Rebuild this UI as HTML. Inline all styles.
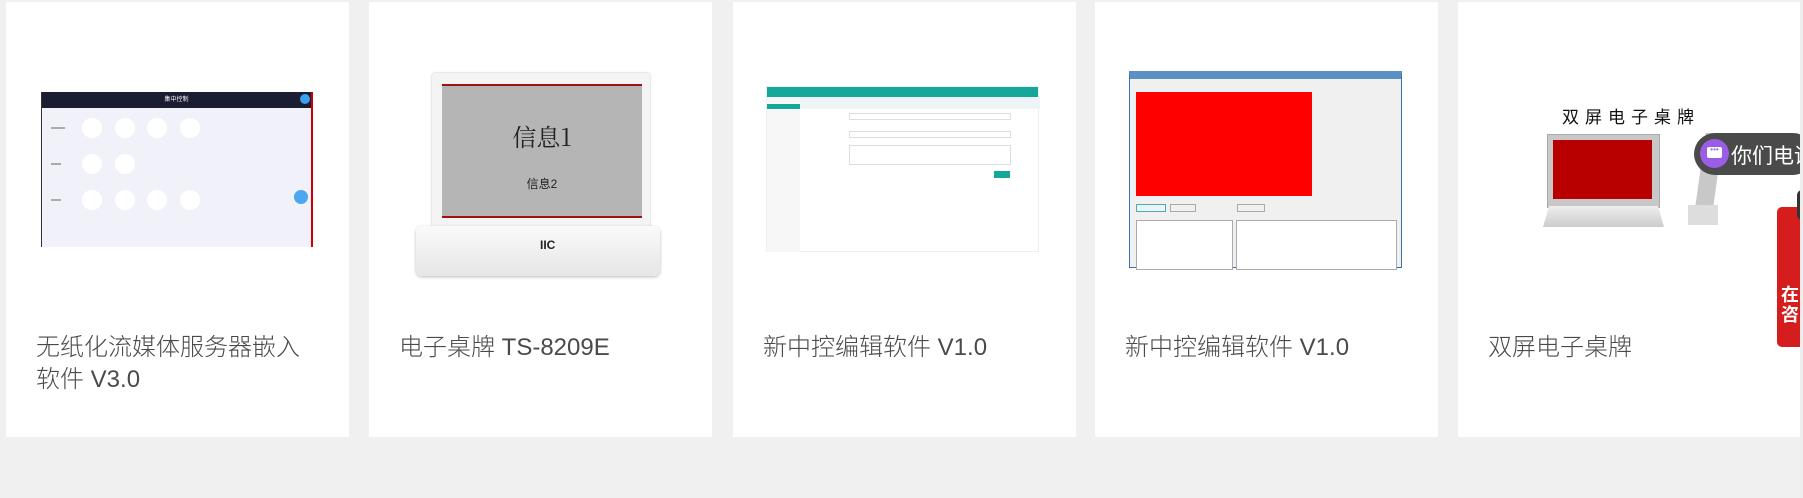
<!DOCTYPE html>
<html><head><meta charset="utf-8"><style>
*{margin:0;padding:0;box-sizing:border-box}
body{width:1803px;height:498px;background:#f0f0f0;overflow:hidden;position:relative;font-family:"Liberation Sans","Noto Sans CJK SC",sans-serif}
.card{position:absolute;top:2px;height:435px;width:343px;background:#fff}
.t{position:absolute;left:30px;top:330px;font-size:24px;line-height:32px;color:#4a4a4a;font-weight:300;width:268px}
.a{position:absolute}
</style></head><body>
<div class="card" style="left:6px"><div class="t">无纸化流媒体服务器嵌入软件 V3.0</div></div>
<div class="card" style="left:369px"><div class="t">电子桌牌 TS-8209E</div></div>
<div class="card" style="left:733px"><div class="t">新中控编辑软件 V1.0</div></div>
<div class="card" style="left:1095px"><div class="t">新中控编辑软件 V1.0</div></div>
<div class="card" style="left:1458px;width:345px"><div class="t">双屏电子桌牌</div></div>

<!-- img1 -->
<div class="a" style="left:41px;top:92px;width:272px;height:155px;background:#f1f2f9;border-left:1px solid #333;border-right:2px solid #c00">
 <div style="height:16px;background:#1b1d33;color:#fff;font-size:6px;text-align:center;line-height:16px">集中控制</div>
 <div class="a" style="left:258px;top:2px;width:10px;height:10px;border-radius:50%;background:#3aa0f0"></div>
 <div class="a" style="left:252px;top:98px;width:14px;height:14px;border-radius:50%;background:#4aa7f0"></div>
 <svg class="a" style="left:0;top:0" width="272" height="155">
  <g fill="#fff"><circle cx="50" cy="36" r="10"/><circle cx="83" cy="36" r="10"/><circle cx="115" cy="36" r="10"/><circle cx="148" cy="36" r="10"/>
  <circle cx="50" cy="72" r="10"/><circle cx="83" cy="72" r="10"/>
  <circle cx="50" cy="108" r="10"/><circle cx="83" cy="108" r="10"/><circle cx="115" cy="108" r="10"/><circle cx="148" cy="108" r="10"/></g>
  <g fill="#aaa"><rect x="9" y="35" width="14" height="2"/><rect x="9" y="71" width="10" height="2"/><rect x="9" y="107" width="10" height="2"/></g>
 </svg>
</div>

<!-- img2 -->
<div class="a" style="left:432px;top:73px;width:218px;height:175px;background:#f4f4f4;border-radius:3px;box-shadow:0 0 2px #bbb"></div>
<div class="a" style="left:442px;top:84px;width:200px;height:134px;background:#b5b5b5;border-top:2px solid #a01010;border-bottom:2px solid #a01010"></div>
<div class="a" style="left:442px;top:118px;width:200px;text-align:center;font-family:'Noto Serif CJK SC',serif;font-size:24px;color:#222">信息1</div>
<div class="a" style="left:442px;top:175px;width:200px;text-align:center;font-size:12px;color:#222">信息2</div>
<div class="a" style="left:416px;top:226px;width:244px;height:50px;background:linear-gradient(#fafafa,#e6e6e6);border-radius:6px;box-shadow:0 1px 3px #bbb"></div>
<div class="a" style="left:540px;top:238px;font-size:12px;font-weight:bold;color:#222">IIC</div>

<!-- img3 -->
<div class="a" style="left:766px;top:86px;width:273px;height:166px;background:#fff;border:1px solid #eee">
 <div style="height:10px;background:#16a79b"></div>
 <div class="a" style="left:0;top:10px;width:33px;height:155px;background:#f7f7f7"></div>
 <div class="a" style="left:0;top:17px;width:33px;height:5px;background:#16a79b"></div>
 <div class="a" style="left:33px;top:10px;width:240px;height:12px;background:#eef4f6"></div>
 <div class="a" style="left:82px;top:26px;width:162px;height:7px;border:1px solid #ddd"></div>
 <div class="a" style="left:82px;top:44px;width:162px;height:7px;border:1px solid #ddd"></div>
 <div class="a" style="left:82px;top:58px;width:162px;height:20px;border:1px solid #ddd"></div>
 <div class="a" style="left:227px;top:84px;width:16px;height:7px;background:#16a79b"></div>
</div>

<!-- img4 -->
<div class="a" style="left:1129px;top:71px;width:273px;height:197px;background:#f0f0f0;border:1px solid #3a6fb0;border-top:8px solid #5b8fc8">
 <div class="a" style="left:6px;top:13px;width:176px;height:104px;background:#f00"></div>
 <div class="a" style="left:6px;top:125px;width:30px;height:8px;border:1px solid #5aa;background:#e8f4fa"></div>
 <div class="a" style="left:40px;top:125px;width:26px;height:8px;border:1px solid #aaa"></div>
 <div class="a" style="left:107px;top:125px;width:28px;height:8px;border:1px solid #aaa"></div>
 <div class="a" style="left:6px;top:141px;width:97px;height:50px;background:#fff;border:1px solid #aaa"></div>
 <div class="a" style="left:106px;top:141px;width:161px;height:50px;background:#fff;border:1px solid #aaa"></div>
</div>

<!-- img5 -->
<div class="a" style="left:1562px;top:103px;font-size:17px;letter-spacing:6px;color:#111">双屏电子桌牌</div>
<div class="a" style="left:1547px;top:134px;width:113px;height:74px;background:#c8c8c8;border:1px solid #aaa"></div>
<div class="a" style="left:1553px;top:140px;width:99px;height:59px;background:#b80000"></div>
<div class="a" style="left:1543px;top:206px;width:121px;height:21px;background:linear-gradient(#eee,#ccc);clip-path:polygon(5% 0,95% 0,100% 100%,0 100%)"></div>
<div class="a" style="left:1700px;top:133px;width:18px;height:80px;background:#c8c8c8;transform:skewX(-8deg)"></div>
<div class="a" style="left:1688px;top:205px;width:30px;height:20px;background:#ddd"></div>

<!-- chat -->
<div class="a" style="left:1694px;top:133px;width:120px;height:42px;border-radius:21px;background:#4a4a4a"></div>
<div class="a" style="left:1700px;top:139px;width:29px;height:29px;border-radius:50%;background:#9b5de5"><div style="margin:8px 7px;width:15px;height:11px;background:#fff;border-radius:2px;color:#9b5de5;font-size:8px;line-height:6px;text-align:center">•••</div></div>
<div class="a" style="left:1731px;top:140px;font-size:21px;color:#fff;white-space:nowrap">你们电话</div>
<div class="a" style="left:1777px;top:207px;width:30px;height:140px;border-radius:5px;background:#d51d1d"></div>
<div class="a" style="left:1797px;top:190px;width:10px;height:30px;border-radius:5px 0 0 5px;background:#333"></div>
<div class="a" style="left:1781px;top:285px;font-size:18px;font-weight:bold;color:#fff;line-height:20px">在<br>咨</div>
<div class="a" style="left:1800px;top:0;width:3px;height:498px;background:#eee"></div>
</body></html>
